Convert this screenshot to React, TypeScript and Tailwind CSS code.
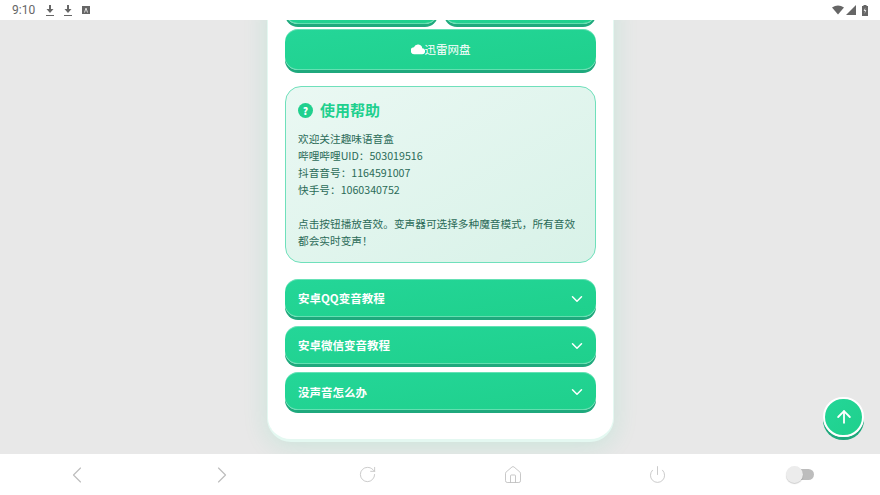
import { ChevronDown, ArrowUp, ChevronLeft, ChevronRight, RotateCw, Home, Power } from 'lucide-react';

const btn = 'rounded-[13px] bg-gradient-to-br from-[#24d698] to-[#1fd08c] text-white shadow-[0_3px_0_#1fa97d,inset_0_1px_0_rgba(255,255,255,0.3),inset_0_-1px_0_rgba(255,255,255,0.3)]';

const StatusBar = () => (
  <div className="h-5 bg-white flex items-center justify-between pl-3 pr-3 text-[#666] font-['Roboto',sans-serif] text-xs shrink-0">
    <div className="flex items-center">
      <span className="w-[33px] text-[12px] leading-5">9:10</span>
      <svg width="10" height="11" viewBox="0 0 10 11" fill="#666"><path d="M4 0h2v4h2.500L5 8 1.500 4H4zM1 10h8v1H1z" /></svg>
      <svg width="10" height="11" viewBox="0 0 10 11" className="ml-[8px]" fill="#666"><path d="M4 0h2v4h2.500L5 8 1.500 4H4zM1 10h8v1H1z" /></svg>
      <svg width="8" height="8" viewBox="0 0 8 8" className="ml-[9px]"><rect width="8" height="8" fill="#666" /><path d="M2.500 6.500 4 2l1.500 4.500" fill="none" stroke="#ddd" strokeWidth="1" /></svg>
    </div>
    <div className="flex items-center">
      <svg width="12" height="10" viewBox="0 0 12 10" fill="#666"><path d="M0 2.500Q6-1.500 12 2.500L6 9.500z" /></svg>
      <svg width="10" height="10" viewBox="0 0 10 10" className="ml-[2px]" fill="#666"><path d="M10 0V10H0z" /></svg>
      <svg width="6" height="11" viewBox="0 0 6 11" className="ml-[6px]" fill="#666"><path d="M0 1h1.500V0h3v1H6v10H0z" /><path d="M3.300 2.500 1.600 6H3L2.500 9 4.400 5H3.100z" fill="#e5e5e5" /></svg>
    </div>
  </div>
);

const Accordion = ({ title }: { title: string }) => (
  <div className={`${btn} h-[38px] mb-[8.7px] pt-[2px] flex items-center justify-between pl-[13px] pr-[10px] text-[11.5px] font-bold`}>
    <span>{title}</span>
    <ChevronDown size={18} strokeWidth={2} />
  </div>
);

const BottomNav = () => (
  <div className="h-[41px] bg-white shrink-0 flex items-center text-[#bdbdbd]">
    <div className="w-full grid grid-cols-6 items-center justify-items-center px-1">
      <ChevronLeft size={28} strokeWidth={1} />
      <ChevronRight size={28} strokeWidth={1} />
      <RotateCw size={19} strokeWidth={1} />
      <Home size={20} strokeWidth={1} />
      <Power size={19} strokeWidth={1} />
      <div className="relative w-7 h-[17px] mr-[6px] flex items-center">
        <div className="ml-2 w-5 h-[11px] rounded-full bg-[#bdbdbd]" />
        <div className="absolute left-0 top-0 w-[17px] h-[17px] rounded-full bg-[#ececec] shadow-[0_1px_1px_rgba(0,0,0,0.2)]" />
      </div>
    </div>
  </div>
);

export default function App() {
  return (
    <div className="w-[880px] h-[495px] overflow-hidden flex flex-col font-['Noto_Sans_CJK_SC','Noto_Sans',sans-serif]">
      <StatusBar />
      <main className="relative flex-1 min-h-0 bg-[#e8e8e8] overflow-hidden flex flex-col justify-end items-center pb-[12px]">
        <div className="w-[347px] shrink-0 bg-white rounded-[24px] border-b-[3px] border-x border-[#e4f8f1] shadow-[0_4px_25px_rgba(32,208,142,0.15)] px-[17px] pb-[19.9px] ml-[1px]">
          <div className="grid grid-cols-2 gap-[6px] mb-[5px]">
            <div className={`${btn} h-[40px]`} />
            <div className={`${btn} h-[40px]`} />
          </div>
          <div className={`${btn} h-[41px] flex items-center justify-center text-[11.5px]`}>
            <svg width="14" height="11" viewBox="0 0 24 18" fill="white"><path d="M19.400 7A7.500 7.500 0 0 0 5 5 6 6 0 0 0 6 17h13a5 5 0 0 0 .4-10z" /></svg>
            <span>迅雷网盘</span>
          </div>
          <section className="mt-[16px] mb-[16px] h-[177px] rounded-[16px] border border-[#6fe0bb] bg-gradient-to-br from-[#eaf8f3] to-[#d8f2e8] px-3 pt-[11px]">
            <h2 className="flex items-center gap-[7px] text-[15px] leading-[24px] font-bold text-[#20d08e]">
              <span className="w-[15px] h-[15px] rounded-full bg-[#20d08e] text-white text-[10px] leading-[15px] text-center font-black">?</span>
              使用帮助
            </h2>
            <p className="mt-[8px] text-[10.67px] leading-[17.07px] text-[#2b6b58] whitespace-pre-line">
              {'欢迎关注趣味语音盒\n哔哩哔哩UID：503019516\n抖音音号：1164591007\n快手号：1060340752\n\n点击按钮播放音效。变声器可选择多种魔音模式，所有音效都会实时变声！'}
            </p>
          </section>
          <Accordion title="安卓QQ变音教程" />
          <Accordion title="安卓微信变音教程" />
          <Accordion title="没声音怎么办" />
        </div>
        <button className="absolute right-[16px] bottom-[17px] w-[41px] h-[40px] rounded-full bg-gradient-to-br from-[#24d698] to-[#1fd08c] border-2 border-white flex items-center justify-center text-white shadow-[0_3px_0_#1fa97d]">
          <ArrowUp size={20} strokeWidth={2.2} />
        </button>
      </main>
      <BottomNav />
    </div>
  );
}
